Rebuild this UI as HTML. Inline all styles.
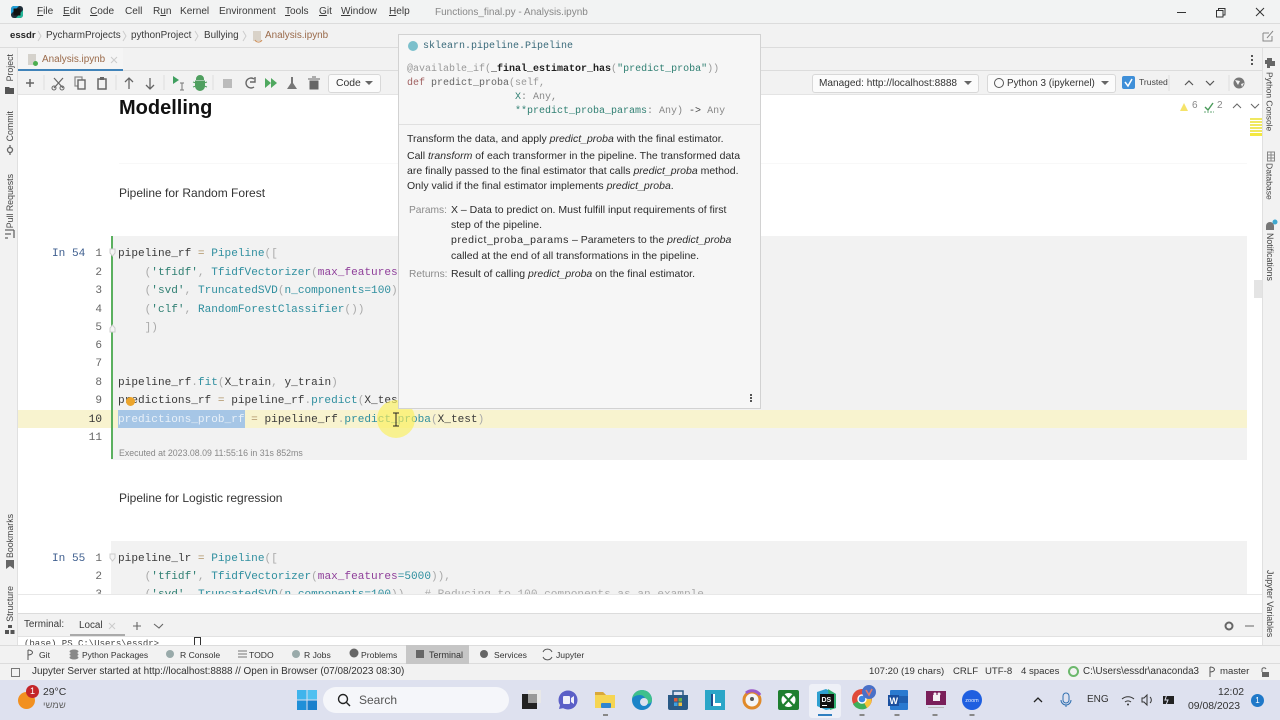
<!DOCTYPE html>
<html><head><meta charset="utf-8"><style>
*{box-sizing:border-box}
html,body{margin:0;padding:0;width:1280px;height:720px;overflow:hidden;background:#f2f2f2;font-family:"Liberation Sans","Noto Sans CJK SC",sans-serif;color:#222}
.a{position:absolute;white-space:pre;line-height:1}
.s{font-size:10.1px;color:#3a3a3a}
.m{font-family:"Liberation Mono",monospace;font-size:11.1px;color:#3a3a3a;white-space:pre;position:absolute;line-height:14px}
.ln{font-family:"Liberation Mono",monospace;font-size:11.1px;color:#666;position:absolute;width:20px;text-align:right;left:82px;line-height:14px}
.t{color:#2f8f9f}.g{color:#2f7f72}.p{color:#8f3f9a}.c{color:#aaa}.e{color:#b09468}
.r{position:absolute;writing-mode:vertical-rl;font-size:8.8px;color:#444;line-height:1;white-space:nowrap}
.l{transform:rotate(180deg)}
.dd{position:absolute;height:19px;background:#fbfbfb;border:1px solid #d8d8d8;border-radius:3px;line-height:17px;color:#333;white-space:nowrap}
.tri{position:absolute;width:0;height:0;border-left:4px solid transparent;border-right:4px solid transparent;border-top:4px solid #666}
.d{font-size:10.5px;color:#2b2b2b;position:absolute;white-space:pre;line-height:13px}
.b{position:absolute}
.tt{position:absolute;white-space:pre;line-height:1;top:651px;font-size:8.6px;color:#333}
.st{position:absolute;white-space:pre;line-height:1;top:667px;font-size:9.6px;color:#333}
svg{position:absolute;overflow:visible}
</style></head><body>

<!-- title bar -->
<div class="b" style="left:0;top:0;width:1280px;height:24px;background:#f2f3f3;border-bottom:1px solid #dcdcdc"></div>
<svg style="left:10px;top:5px" width="14" height="14"><rect x="1" y="1" width="12" height="12" rx="3" fill="#1f2f3a"/><path d="M1 4A3 3 0 0 1 4 1H9L1 9Z" fill="#22a0d8"/><path d="M13 5V10A3 3 0 0 1 10 13H6Z" fill="#25b89a"/><rect x="3.5" y="3.5" width="7" height="7" fill="#111"/></svg>
<div class="a s" style="left:37px;top:7px"><u>F</u>ile</div>
<div class="a s" style="left:63px;top:7px"><u>E</u>dit</div>
<div class="a s" style="left:90px;top:7px"><u>C</u>ode</div>
<div class="a s" style="left:125px;top:7px">Cell</div>
<div class="a s" style="left:153px;top:7px">R<u>u</u>n</div>
<div class="a s" style="left:180px;top:7px">Kernel</div>
<div class="a s" style="left:219px;top:7px">Environment</div>
<div class="a s" style="left:285px;top:7px"><u>T</u>ools</div>
<div class="a s" style="left:319px;top:7px"><u>G</u>it</div>
<div class="a s" style="left:341px;top:7px"><u>W</u>indow</div>
<div class="a s" style="left:389px;top:7px"><u>H</u>elp</div>
<div class="a" style="left:435px;top:8px;font-size:10px;color:#888">Functions_final.py - Analysis.ipynb</div>
<div class="b" style="left:1177px;top:12px;width:9px;height:1px;background:#333"></div>
<svg style="left:1216px;top:8px" width="10" height="10"><path d="M2.5 2.5V.5H9V7H7M.5 2.5H7V9H.5Z" fill="none" stroke="#333"/></svg>
<svg style="left:1255px;top:7px" width="10" height="10"><path d="M1 1L9 9M9 1L1 9" stroke="#333" fill="none"/></svg>

<!-- breadcrumb -->
<div class="b" style="left:0;top:24px;width:1280px;height:24px;background:#f2f2f2;border-bottom:1px solid #dcdcdc"></div>
<div class="a" style="left:10px;top:31px;font-size:9.6px;color:#222;font-weight:bold">essdr</div>
<div class="a s" style="left:46px;top:31px;font-size:9.9px">PycharmProjects</div>
<div class="a s" style="left:131px;top:31px;font-size:9.9px">pythonProject</div>
<div class="a s" style="left:204px;top:31px;font-size:9.9px">Bullying</div>
<div class="a s" style="left:265px;top:31px;font-size:9.9px;color:#9a6a4a">Analysis.ipynb</div>
<svg style="left:0;top:24px" width="260" height="24"><path d="M38 7L41 12L38 17M123 7L126 12L123 17M195 7L198 12L195 17M243 7L246 12L243 17" stroke="#ccc" fill="none"/><rect x="253" y="7" width="8" height="10" fill="#d9d2c8"/><path d="M255 16A4 4 0 0 0 262 16" stroke="#d0905a" fill="none"/></svg>
<svg style="left:1262px;top:30px" width="12" height="12"><path d="M1 3H7M1 3V11H10V6M5 8L11 1" stroke="#888" fill="none"/></svg>

<!-- tab row -->
<div class="b" style="left:18px;top:48px;width:1244px;height:23px;background:#f2f2f2;border-bottom:1px solid #dcdcdc"></div>
<div class="b" style="left:18px;top:48px;width:105px;height:23px;background:#f5f5f5;border-bottom:2px solid #4083b9"></div>
<div class="b" style="left:28px;top:54px;width:8px;height:11px;background:#d5d2cc"></div>
<div class="b" style="left:33px;top:61px;width:5px;height:5px;border-radius:50%;background:#4caf50"></div>
<div class="a s" style="left:42px;top:55px;font-size:9.9px;color:#9a6a4a">Analysis.ipynb</div>
<svg style="left:110px;top:56px" width="8" height="8"><path d="M1 1L7 7M7 1L1 7" stroke="#ccc" fill="none"/></svg>
<div class="b" style="left:1251px;top:55px;width:2px;height:2px;background:#555;box-shadow:0 4px 0 #555,0 8px 0 #555"></div>

<!-- toolbar -->
<div class="b" style="left:18px;top:71px;width:1244px;height:24px;background:#f2f2f2;border-bottom:1px solid #e4e4e4"></div>
<svg style="left:18px;top:71px" width="340" height="24">
<path d="M8 12H16M12 8V16" stroke="#666" stroke-width="1.5" fill="none"/>
<path d="M26 4V19M98 4V19M146 4V19M195 4V19" stroke="#ddd" fill="none"/>
<path d="M36 7L45 17M45 7L36 17" stroke="#666" stroke-width="1.2" fill="none"/><circle cx="36" cy="17" r="2" fill="none" stroke="#666"/><circle cx="44" cy="17" r="2" fill="none" stroke="#666"/>
<rect x="57" y="6" width="7" height="9" fill="none" stroke="#888" stroke-width="1.2"/><rect x="60" y="9" width="7" height="9" fill="#f2f2f2" stroke="#666" stroke-width="1.4"/>
<rect x="80" y="8" width="8" height="10" fill="none" stroke="#666" stroke-width="1.5"/><rect x="82" y="6" width="4" height="3" fill="#666"/>
<path d="M111 18V7M107 11L111 7L115 11M132 7V18M128 14L132 18L136 14" stroke="#666" stroke-width="1.3" fill="none"/>
<path d="M155 5L161 9L155 13Z" fill="#3f9f5f"/>
<path d="M164 12V19M162 12H166M162 19H166" stroke="#777" fill="none"/>
<path d="M178 8A4 4 0 0 1 186 8V9H178ZM177 9.5H187V15A5 5 0 0 1 177 15Z" fill="#4f9f5f"/><path d="M175 11L178 12M175 16L178 15M189 11L186 12M189 16L186 15" stroke="#4f9f5f"/>
<rect x="205" y="8" width="9" height="9" fill="#bbb"/>
<path d="M236 8A5 5 0 1 0 236 16M232 11H237V6" stroke="#666" stroke-width="1.4" fill="none"/>
<path d="M247 7L253 12L247 17ZM253 7L259 12L253 17Z" fill="#4fa85f"/>
<path d="M273 6H275V12L279 18H269L273 12Z" fill="#777"/>
<path d="M290 8H302M292 10H300V18H292ZM294 6H298" stroke="#666" fill="#666"/>
</svg>
<div class="dd" style="left:328px;top:74px;width:53px;padding-left:7px;font-size:10.4px">Code</div>
<div class="tri" style="left:365px;top:81px"></div>
<div class="dd" style="left:812px;top:74px;width:167px;padding-left:6px;font-size:10.1px">Managed: http://localhost:8888</div>
<div class="tri" style="left:964px;top:81px"></div>
<div class="dd" style="left:987px;top:74px;width:129px;padding-left:19px;font-size:9.9px">Python 3 (ipykernel)</div>
<div class="b" style="left:994px;top:78px;width:10px;height:10px;border:1px solid #555;border-radius:50%"></div>
<div class="tri" style="left:1101px;top:81px"></div>
<div class="b" style="left:1122px;top:76px;width:13px;height:13px;background:#3f8fd8;border-radius:2px"></div>
<svg style="left:1122px;top:76px" width="13" height="13"><path d="M3 6L6 10L10 3" stroke="#fff" stroke-width="1.5" fill="none"/></svg>
<div class="a" style="left:1139px;top:78px;font-size:8.6px;color:#444">Trusted</div>
<svg style="left:1175px;top:71px" width="80" height="24">
<path d="M10 14L14 10L18 14M31 10L35 14L39 10" stroke="#555" stroke-width="1.2" fill="none"/>
<path d="M-6 4V20M54 4V20" stroke="#ddd" fill="none"/>
<circle cx="64" cy="12" r="5.5" fill="#777"/><path d="M60 9L65 10L63 14ZM66 13L69 12L67 16Z" fill="#f2f2f2"/>
</svg>

<!-- left strip -->
<div class="b" style="left:0;top:48px;width:18px;height:600px;background:#f2f2f2;border-right:1px solid #e0e0e0"></div>
<div class="r l" style="left:6px;top:54px">Project</div>
<svg style="left:0;top:0" width="18" height="640">
<path d="M5 87H9L10 88H14V94H5Z" fill="#555"/>
<circle cx="10" cy="150" r="2.5" fill="none" stroke="#666" stroke-width="1.3"/><path d="M10 145V147.5M10 152.5V155" stroke="#666" stroke-width="1.3"/>
<path d="M5 230H14M14 230V238M5 234H11M5 238H8" stroke="#666" stroke-width="1.3" fill="none"/>
<path d="M6 560H14V569L10 566L6 569Z" fill="#666"/>
<path d="M8 625H12V628H8ZM5 630H9V634H5ZM10.5 630H14.5V634H10.5Z" fill="#555"/>
</svg>
<div class="r l" style="left:6px;top:111px">Commit</div>
<div class="r l" style="left:6px;top:174px">Pull Requests</div>
<div class="r l" style="left:6px;top:514px">Bookmarks</div>
<div class="r l" style="left:6px;top:586px">Structure</div>

<!-- right strip -->
<div class="b" style="left:1262px;top:48px;width:18px;height:600px;background:#f2f2f2;border-left:1px solid #e0e0e0"></div>
<svg style="left:1262px;top:0" width="18" height="240">
<path d="M5 58H10V61H13V66H8V68H5V64H3V60H5Z" fill="#666"/>
<path d="M5 152H13M5 155H13M5 158H13M5 161H13M5.5 152V161M9 152V161M12.5 152V161" stroke="#888" fill="none"/>
<path d="M4 230V226A4 4 0 0 1 12 226V230Z" fill="#777"/><circle cx="13" cy="222" r="2.5" fill="#3fa9d0"/>
</svg>
<div class="r" style="left:1265px;top:72px;font-size:8.4px">Python Console</div>
<div class="r" style="left:1265px;top:163px;font-size:8.6px">Database</div>
<div class="r" style="left:1265px;top:233px">Notifications</div>
<div class="r" style="left:1265px;top:570px">Jupyter Variables</div>

<!-- editor -->
<div class="b" style="left:18px;top:95px;width:1244px;height:518px;background:#fff"></div>
<div class="a" style="left:119px;top:98px;font-size:20px;font-weight:bold;color:#111">Modelling</div>
<div class="b" style="left:119px;top:163px;width:1128px;height:1px;background:#f8f8f8"></div>
<div class="a" style="left:119px;top:187px;font-size:12px;color:#333">Pipeline for Random Forest</div>
<div class="a" style="left:119px;top:492px;font-size:12px;color:#333">Pipeline for Logistic regression</div>

<!-- warnings -->
<svg style="left:1179px;top:100px" width="80" height="14">
<path d="M1 11L5 3L9 11Z" fill="#f5e36a"/>
<path d="M26 7L29 10L34 3" stroke="#4a9a5a" stroke-width="1.4" fill="none"/><path d="M25 12H35" stroke="#6aaa7a" stroke-dasharray="2 1"/>
<path d="M54 8L58 4L62 8M72 4L76 8L80 4" stroke="#666" fill="none"/>
</svg>
<div class="a" style="left:1192px;top:101px;font-size:10px;color:#888">6</div>
<div class="a" style="left:1217px;top:101px;font-size:10px;color:#888">2</div>
<div class="b" style="left:1250px;top:118px;width:12px;height:2px;background:#f0e860;box-shadow:0 3px 0 #f0e860,0 6px 0 #f0e860,0 9px 0 #f0e860,0 12px 0 #f0e860,0 15px 0 #f4e840,0 16px 0 #f4e840"></div>
<div class="b" style="left:1254px;top:280px;width:8px;height:18px;background:#e4e4e4"></div>

<!-- cell 1 -->
<div class="b" style="left:111px;top:236px;width:1136px;height:224px;background:#f2f2f2"></div>
<div class="b" style="left:18px;top:410px;width:1229px;height:18px;background:#f8f3cf"></div>
<div class="b" style="left:111px;top:236px;width:2px;height:223px;background:#5bb05f"></div>
<svg style="left:109px;top:248px" width="8" height="85"><path d="M1 1H6V5L3.5 8L1 5Z" fill="#f4f4f4" stroke="#ccc"/><path d="M1 84H6V80L3.5 77L1 80Z" fill="#f4f4f4" stroke="#ccc"/></svg>
<div class="m" style="left:52px;top:247px;color:#3f5f8f">In 54</div>
<div class="ln" style="top:247px">1</div>
<div class="ln" style="top:266px">2</div>
<div class="ln" style="top:284px">3</div>
<div class="ln" style="top:303px">4</div>
<div class="ln" style="top:321px">5</div>
<div class="ln" style="top:339px">6</div>
<div class="ln" style="top:357px">7</div>
<div class="ln" style="top:376px">8</div>
<div class="ln" style="top:394px">9</div>
<div class="ln" style="top:413px;color:#333">10</div>
<div class="ln" style="top:431px">11</div>

<div class="m" style="left:118px;top:247px">pipeline_rf <span class="e">=</span> <span class="t">Pipeline</span><span class="c">([</span></div>
<div class="m" style="left:118px;top:266px"><span class="c">    (</span><span class="g">'tfidf'</span><span class="c">,</span> <span class="t">TfidfVectorizer</span><span class="c">(</span><span class="p">max_features</span></div>
<div class="m" style="left:118px;top:284px"><span class="c">    (</span><span class="g">'svd'</span><span class="c">,</span> <span class="t">TruncatedSVD</span><span class="c">(</span><span class="t">n_components=100</span><span class="c">)</span></div>
<div class="m" style="left:118px;top:303px"><span class="c">    (</span><span class="g">'clf'</span><span class="c">,</span> <span class="t">RandomForestClassifier</span><span class="c">())</span></div>
<div class="m" style="left:118px;top:321px"><span class="c">    ])</span></div>
<div class="m" style="left:118px;top:376px">pipeline_rf<span class="c">.</span><span class="t">fit</span><span class="c">(</span>X_train<span class="c">,</span> y_train<span class="c">)</span></div>
<div class="m" style="left:118px;top:394px">predictions_rf <span class="e">=</span> pipeline_rf<span class="c">.</span><span class="t">predict</span><span class="c">(</span>X_tes</div>
<div class="b" style="left:118px;top:410px;width:127px;height:18px;background:#a6c6e6"></div>
<div class="m" style="left:118px;top:413px"><span style="color:#e8f0f8">predictions_prob_rf</span> <span class="e">=</span> pipeline_rf<span class="c">.</span><span class="t">predict_proba</span><span class="c">(</span>X_test<span class="c">)</span></div>
<div class="b" style="left:126px;top:397px;width:9px;height:9px;border-radius:50%;background:#eca52c"></div>
<div class="a" style="left:119px;top:449px;font-size:8.8px;color:#888">Executed at 2023.08.09 11:55:16 in 31s 852ms</div>

<!-- cell 2 -->
<div class="b" style="left:111px;top:541px;width:1136px;height:53px;background:#f2f2f2"></div>
<svg style="left:109px;top:553px" width="8" height="10"><path d="M1 1H6V5L3.5 8L1 5Z" fill="#f4f4f4" stroke="#ccc"/></svg>
<div class="m" style="left:52px;top:552px;color:#3f5f8f">In 55</div>
<div class="ln" style="top:552px">1</div>
<div class="ln" style="top:570px">2</div>
<div class="ln" style="top:588px">3</div>
<div class="m" style="left:118px;top:552px">pipeline_lr <span class="e">=</span> <span class="t">Pipeline</span><span class="c">([</span></div>
<div class="m" style="left:118px;top:570px"><span class="c">    (</span><span class="g">'tfidf'</span><span class="c">,</span> <span class="t">TfidfVectorizer</span><span class="c">(</span><span class="p">max_features</span><span class="t">=5000</span><span class="c">)),</span></div>
<div class="m" style="left:118px;top:588px"><span class="c">    (</span><span class="g">'svd'</span><span class="c">,</span> <span class="t">TruncatedSVD</span><span class="c">(</span><span class="t">n_components=100</span><span class="c">)),  # Reducing to 100 components as an example</span></div>
<div class="b" style="left:18px;top:594px;width:1244px;height:19px;background:#fff;border-top:1px solid #e8e8e8"></div>

<!-- cursor highlight -->
<div class="b" style="left:377px;top:400px;width:38px;height:38px;border-radius:50%;background:rgba(250,240,90,.65)"></div>
<svg style="left:392px;top:412px" width="8" height="15"><path d="M1 1H7M4 1V14M1 14H7" stroke="#222" fill="none"/></svg>

<!-- popup -->
<div class="b" style="left:398px;top:34px;width:363px;height:375px;background:#f6f6f6;border:1px solid #d2d2d2"></div>
<div class="b" style="left:399px;top:124px;width:361px;height:1px;background:#e0e0e0"></div>
<div class="b" style="left:408px;top:41px;width:10px;height:10px;border-radius:50%;background:#7cc0cc"></div>
<div class="m" style="left:423px;top:40px;font-size:10px;color:#3a6a7a">sklearn.pipeline.Pipeline</div>
<div class="m" style="left:407px;top:63px;font-size:10px"><span style="color:#999">@available_if(</span><b style="color:#222">_final_estimator_has</b><span style="color:#999">(</span><span class="g">"predict_proba"</span><span style="color:#999">))</span></div>
<div class="m" style="left:407px;top:77px;font-size:10px"><span style="color:#a06060">def</span> <span style="color:#666">predict_proba</span><span style="color:#999">(self,</span></div>
<div class="m" style="left:515px;top:91px;font-size:10px"><span class="g">X</span><span style="color:#888">: Any,</span></div>
<div class="m" style="left:515px;top:105px;font-size:10px"><span class="g">**predict_proba_params</span><span style="color:#888">: Any) </span><span style="color:#444">-&gt;</span><span style="color:#888"> Any</span></div>

<div class="d" style="left:407px;top:133px">Transform the data, and apply <i>predict_proba</i> with the final estimator.</div>
<div class="d" style="left:407px;top:150px">Call <i>transform</i> of each transformer in the pipeline. The transformed data</div>
<div class="d" style="left:407px;top:165px">are finally passed to the final estimator that calls <i>predict_proba</i> method.</div>
<div class="d" style="left:407px;top:180px">Only valid if the final estimator implements <i>predict_proba</i>.</div>
<div class="d" style="left:409px;top:204px;color:#8a8a8a;font-size:10.2px">Params:</div>
<div class="d" style="left:451px;top:204px">X – Data to predict on. Must fulfill input requirements of first</div>
<div class="d" style="left:451px;top:219px">step of the pipeline.</div>
<div class="d" style="left:451px;top:234px"><span style="letter-spacing:.65px">predict_proba_params</span> – Parameters to the <i>predict_proba</i></div>
<div class="d" style="left:451px;top:250px">called at the end of all transformations in the pipeline.</div>
<div class="d" style="left:409px;top:268px;color:#8a8a8a;font-size:10.2px">Returns:</div>
<div class="d" style="left:451px;top:268px">Result of calling <i>predict_proba</i> on the final estimator.</div>
<div class="b" style="left:750px;top:394px;width:2px;height:2px;background:#555;box-shadow:0 3px 0 #555,0 6px 0 #555"></div>

<!-- terminal -->
<div class="b" style="left:18px;top:613px;width:1244px;height:24px;background:#f2f2f2;border-top:1px solid #dcdcdc;border-bottom:1px solid #e2e2e2"></div>
<div class="a s" style="left:24px;top:620px;font-size:9.9px">Terminal:</div>
<div class="a s" style="left:79px;top:621px;font-size:9.9px">Local</div>
<svg style="left:108px;top:620px" width="60" height="12">
<path d="M1 3L7 9M7 3L1 9" stroke="#ccc" fill="none"/>
<path d="M25 6H33M29 2V10M46 4L51 8L55 4" stroke="#666" stroke-width="1.1" fill="none"/>
</svg>
<div class="b" style="left:70px;top:634px;width:55px;height:2px;background:#aaa"></div>
<svg style="left:1224px;top:620px" width="30" height="12"><circle cx="5" cy="6" r="3.5" fill="none" stroke="#666" stroke-width="2"/><path d="M21 6H30" stroke="#666"/></svg>
<div class="b" style="left:18px;top:637px;width:1244px;height:8px;background:#fff"></div>
<div class="m" style="left:24px;top:637px;font-size:9px;color:#444;height:8px;overflow:hidden">(base) PS C:\Users\essdr&gt;</div>
<div class="b" style="left:194px;top:637px;width:7px;height:8px;border:1px solid #333;border-bottom:0"></div>

<!-- tool tabs -->
<div class="b" style="left:0;top:645px;width:1280px;height:19px;background:#f2f2f2;border-top:1px solid #dcdcdc;border-bottom:1px solid #dcdcdc"></div>
<div class="b" style="left:406px;top:645px;width:63px;height:19px;background:#c6c6c6"></div>
<svg style="left:0;top:645px" width="560" height="19">
<path d="M28 5V15M28 5C34 5 34 10 28 10" stroke="#555" fill="none"/>
<ellipse cx="74" cy="6.5" rx="4.5" ry="2" fill="#888"/><ellipse cx="74" cy="9.5" rx="4.5" ry="2" fill="#888"/><ellipse cx="74" cy="12.5" rx="4.5" ry="2" fill="#888"/>
<circle cx="170" cy="9" r="4" fill="#9aa"/>
<path d="M238 6H247M238 9H247M238 12H247" stroke="#777"/>
<circle cx="296" cy="9" r="4" fill="#9aa"/>
<circle cx="354" cy="8" r="4.5" fill="#666"/>
<rect x="416" y="5" width="8" height="8" fill="#666"/>
<circle cx="484" cy="9" r="4" fill="#666"/>
<path d="M543 7A5 5 0 0 1 552 7M543 12A5 5 0 0 0 552 12" stroke="#555" fill="none"/>
</svg>
<div class="tt" style="left:39px">Git</div>
<div class="tt" style="left:82px;font-size:8.5px">Python Packages</div>
<div class="tt" style="left:180px">R Console</div>
<div class="tt" style="left:249px">TODO</div>
<div class="tt" style="left:304px">R Jobs</div>
<div class="tt" style="left:361px">Problems</div>
<div class="tt" style="left:429px;font-size:9px">Terminal</div>
<div class="tt" style="left:494px">Services</div>
<div class="tt" style="left:556px">Jupyter</div>

<!-- status bar -->
<div class="b" style="left:0;top:664px;width:1280px;height:16px;background:#f2f2f2"></div>
<div class="b" style="left:11px;top:668px;width:9px;height:9px;border:1px solid #777"></div>
<div class="st" style="left:32px;font-size:9.95px">Jupyter Server started at http://localhost:8888 // Open in Browser (07/08/2023 08:30)</div>
<div class="st" style="left:869px">107:20 (19 chars)</div>
<div class="st" style="left:953px">CRLF</div>
<div class="st" style="left:985px">UTF-8</div>
<div class="st" style="left:1021px">4 spaces</div>
<div class="b" style="left:1068px;top:666px;width:11px;height:11px;border:2px solid #6cb86c;border-radius:50%"></div>
<div class="st" style="left:1083px;font-size:9.8px">C:\Users\essdr\anaconda3</div>
<svg style="left:1208px;top:666px" width="10" height="12"><path d="M2 1V11M2 1C8 1 8 6 2 6" stroke="#555" fill="none"/></svg>
<div class="st" style="left:1220px">master</div>
<svg style="left:1260px;top:666px" width="10" height="12"><path d="M2 6V3A2.2 2.2 0 0 1 6 3" stroke="#666" fill="none"/><rect x="2" y="6" width="7" height="5" fill="#666"/></svg>

<!-- taskbar -->
<div class="b" style="left:0;top:680px;width:1280px;height:40px;background:#dee1ef"></div>
<div class="b" style="left:18px;top:692px;width:17px;height:17px;border-radius:50%;background:#f29020"></div>
<div class="b" style="left:26px;top:685px;width:13px;height:13px;border-radius:50%;background:#c4252a;color:#fff;font-size:9px;line-height:13px;text-align:center">1</div>
<div class="a" style="left:43px;top:688px;font-size:10.4px;color:#333">29°C</div>
<div class="a" style="left:43px;top:701px;font-size:9.5px;color:#666;font-family:'Liberation Sans','DejaVu Sans',sans-serif">שמשי</div>
<svg style="left:297px;top:690px" width="20" height="20"><rect width="9.5" height="9.5" fill="#3fb4ec"/><rect x="10.5" width="9.5" height="9.5" fill="#4fc0f0"/><rect y="10.5" width="9.5" height="9.5" fill="#1f8fd8"/><rect x="10.5" y="10.5" width="9.5" height="9.5" fill="#1a80cc"/></svg>
<div class="b" style="left:323px;top:687px;width:186px;height:26px;border-radius:13px;background:#f5f6fa"></div>
<svg style="left:337px;top:693px" width="14" height="14"><circle cx="6" cy="6" r="4.5" fill="none" stroke="#222" stroke-width="1.4"/><path d="M9.5 9.5L13 13" stroke="#222" stroke-width="1.4"/></svg>
<div class="a" style="left:359px;top:694px;font-size:12px;color:#555">Search</div>

<svg style="left:510px;top:680px" width="240" height="40">
<rect x="12" y="14" width="15" height="15" fill="#222"/><rect x="18" y="10" width="13" height="13" fill="#e8e8e8"/><rect x="18" y="14" width="9" height="9" fill="#999"/>
<circle cx="58" cy="20" r="9.5" fill="#5b5fc7"/><path d="M50 25L49 29L54 28Z" fill="#5b5fc7"/><rect x="53" y="16" width="7" height="8" rx="1" fill="#f0f0fa"/><path d="M61 18L64 16V24L61 22Z" fill="#f0f0fa"/>
<path d="M85 12H93L96 15H105V28H85Z" fill="#f6d552"/><path d="M85 12H93L96 15H85Z" fill="#d9a83a"/><rect x="91" y="23" width="10" height="5" rx="1" fill="#2f85d0"/>
<rect x="93" y="34" width="5" height="2" fill="#888"/>
<circle cx="132" cy="20" r="10" fill="#1b84c8"/><path d="M122 20A10 10 0 0 1 142 20C142 24 136 25 134 23C138 20 134 15 130 15C126 15 122 17 122 20Z" fill="#3fc08c"/><circle cx="134" cy="22" r="4" fill="#dee1ef"/>
<path d="M158 15H178V28A2 2 0 0 1 176 30H160A2 2 0 0 1 158 28Z" fill="#2a5a86"/><path d="M163 15V11H173V15" stroke="#2a5a86" stroke-width="1.5" fill="none"/>
<rect x="164" y="18" width="3.5" height="3.5" fill="#e05a3a"/><rect x="168.5" y="18" width="3.5" height="3.5" fill="#6ab04a"/><rect x="164" y="22.5" width="3.5" height="3.5" fill="#3fa0e0"/><rect x="168.5" y="22.5" width="3.5" height="3.5" fill="#f0c040"/>
<rect x="195" y="10" width="20" height="20" fill="#2ba6c8"/><path d="M201 14H205V23H211V26H201Z" fill="#fff"/><path d="M201 14H203V26H201Z" fill="#1f4f8f"/>
<circle cx="242" cy="20" r="8" fill="#f5f5f5" stroke="#e08a2a" stroke-width="3"/><path d="M236 13A9.5 9.5 0 0 1 250 15" stroke="#9a5ac8" stroke-width="3" fill="none"/><circle cx="242" cy="19" r="2" fill="#555"/>
</svg>

<svg style="left:770px;top:680px" width="220" height="40">
<rect x="8" y="10" width="21" height="20" rx="2" fill="#1f7f2f"/><circle cx="18.5" cy="20" r="7" fill="#fff"/><path d="M13 14L18.5 20L24 14M13 26L18.5 20L24 26" stroke="#1f7f2f" stroke-width="2.2" fill="none"/>
<rect x="39" y="4" width="32" height="34" rx="3" fill="#eef0f7"/>
<path d="M47 12L56 9L66 14V28L56 30L47 26Z" fill="#2fa0d0"/><path d="M58 9L66 14V28L60 30Z" fill="#30b070"/>
<rect x="50" y="14" width="14" height="14" fill="#111"/>
<text x="51.5" y="22" font-family="Liberation Sans" font-size="7" font-weight="bold" fill="#fff">DS</text>
<rect x="52" y="25" width="5" height="1" fill="#fff"/>
<rect x="48" y="34" width="14" height="2" fill="#2f7fc0"/>
<circle cx="92" cy="19" r="10" fill="#e04a3a"/><path d="M83 24A10 10 0 0 0 97 28L92 19Z" fill="#3faf5a"/><path d="M92 19L97 28A10 10 0 0 0 100 14H92Z" fill="#f5c53a"/><circle cx="92" cy="19" r="4" fill="#3a85e0" stroke="#fff" stroke-width="1.4"/>
<circle cx="99" cy="12" r="7" fill="#4a70c8"/><path d="M96 10L99 15L102 9" stroke="#e07a6a" stroke-width="1.6" fill="none"/>
<rect x="89.5" y="34" width="5" height="2" fill="#888"/>
<rect x="120" y="10" width="18" height="20" rx="1" fill="#2a7ad0"/><rect x="120" y="16" width="18" height="7" fill="#1f5fb0"/><rect x="118" y="15" width="11" height="11" fill="#1a4f9f"/>
<text x="119.5" y="24" font-family="Liberation Sans" font-size="9" font-weight="bold" fill="#fff">W</text>
<rect x="124.5" y="34" width="5" height="2" fill="#888"/>
<rect x="156" y="11" width="20" height="14" fill="#7a1f5a"/><rect x="163" y="15" width="7" height="6" fill="#f5f0f5"/><circle cx="165" cy="14" r="1.5" fill="#f5f0f5"/><circle cx="169" cy="14" r="1.5" fill="#f5f0f5"/><rect x="158" y="27" width="16" height="1" fill="#bbb"/>
<rect x="162.5" y="34" width="5" height="2" fill="#888"/>
<circle cx="202" cy="20" r="10" fill="#1f5fe0"/><text x="202" y="22" text-anchor="middle" font-family="Liberation Sans" font-size="5.5" fill="#e8f0ff">zoom</text>
<rect x="199.5" y="34" width="5" height="2" fill="#888"/>
</svg>

<svg style="left:1030px;top:692px" width="150" height="16">
<path d="M4 10L8 6L12 10" stroke="#222" stroke-width="1.3" fill="none"/>
<rect x="33" y="1" width="6" height="10" rx="3" fill="none" stroke="#2f6fb0"/>
<path d="M31 8A5 5 0 0 0 41 8M36 13V15" stroke="#2f6fb0" fill="none"/>
<path d="M92 7A9 9 0 0 1 104 7M95 10A4.5 4.5 0 0 1 101 10" stroke="#333" fill="none"/><circle cx="98" cy="12.5" r="1" fill="#333"/>
<path d="M112 6H114L117 3V13L114 10H112ZM120 5A4 4 0 0 1 120 11" fill="none" stroke="#333"/>
<rect x="133" y="4" width="11" height="8" fill="#222"/><path d="M137 2L135 8H138L136 13" stroke="#dee1ef" fill="none"/>
</svg>
<div class="a" style="left:1087px;top:695px;font-size:10px;color:#333">ENG</div>
<div class="a" style="left:1218px;top:688px;font-size:10.4px;color:#333">12:02</div>
<div class="a" style="left:1188px;top:702px;font-size:10.4px;color:#333">09/08/2023</div>
<div class="b" style="left:1251px;top:694px;width:13px;height:13px;border-radius:50%;background:#1f78c8;color:#fff;font-size:8px;line-height:13px;text-align:center">1</div>
</body></html>
